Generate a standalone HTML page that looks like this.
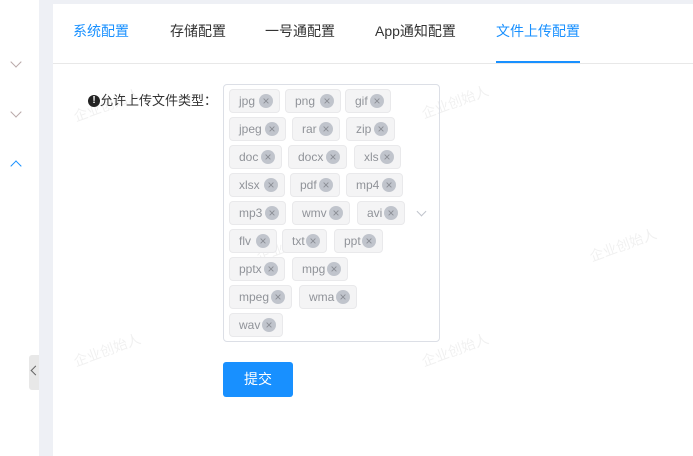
<!DOCTYPE html>
<html><head><meta charset="utf-8"><style>
body{margin:0;width:693px;height:456px;position:relative;overflow:hidden;background:#fff;font-family:"Liberation Sans","Noto Sans CJK SC",sans-serif;}
.strip{position:absolute;left:39px;top:0;width:14px;height:456px;background:#eef0f5;}
.topbar{position:absolute;left:39px;top:0;width:654px;height:4px;background:#eef0f5;}
.card{position:absolute;left:53px;top:4px;width:640px;height:452px;background:#fff;}
.tabs{position:absolute;left:53px;top:4px;width:640px;height:59px;border-bottom:1px solid #e8e8e8;}
.tab{position:absolute;top:22px;font-size:14px;color:#333;white-space:nowrap;line-height:18px;}
.act{color:#1890ff;}
.ul{position:absolute;left:496px;top:61px;width:84px;height:2px;background:#1890ff;}
.lab{position:absolute;left:100px;top:93px;font-size:13px;color:#333;line-height:16px;white-space:nowrap;}
.ex{position:absolute;left:88px;top:95px;width:12px;height:12px;border-radius:6px;background:#222;color:#fff;font-size:10px;line-height:12px;text-align:center;font-weight:bold;}
.box{position:absolute;left:223px;top:84px;width:215px;height:256px;border:1px solid #dcdfe6;border-radius:4px;}
.t{position:absolute;height:22px;background:#f4f4f5;border:1px solid #e9e9eb;border-radius:4px;font-size:12px;color:#909399;line-height:22px;box-sizing:content-box;}
.t span{position:absolute;left:9px;}
.t i{position:absolute;right:6px;top:4px;width:14px;height:14px;border-radius:7px;background:#c0c4cc;color:#8a8d94;font-style:normal;font-size:12px;line-height:14px;text-align:center;}
.btn{position:absolute;left:223px;top:362px;width:70px;height:35px;background:#1890ff;border-radius:3px;color:#fff;font-size:14px;line-height:35px;text-align:center;}
.chev{position:absolute;left:12px;width:7px;height:7px;border-right:1px solid #b8a8a8;border-bottom:1px solid #b8a8a8;transform:rotate(45deg);}
.handle{position:absolute;left:29px;top:355px;width:10px;height:35px;background:#e8e8e8;border-radius:3px 0 0 3px;}
.wm{position:absolute;color:rgba(0,0,0,0.06);font-size:14px;transform:rotate(-20deg);white-space:nowrap;}
</style></head><body>
<div class="strip"></div><div class="topbar"></div>
<div class="card"></div>
<div class="tabs"></div>
<div class="tab act" style="left:73px">系统配置</div>
<div class="tab" style="left:170px">存储配置</div>
<div class="tab" style="left:265px">一号通配置</div>
<div class="tab" style="left:375px">App通知配置</div>
<div class="tab act" style="left:496px">文件上传配置</div>
<div class="ul"></div>
<div class="chev" style="top:58px"></div>
<div class="chev" style="top:108px"></div>
<div class="chev" style="top:162px;transform:rotate(225deg);border-color:#1890ff"></div>
<div class="handle"></div>
<div style="position:absolute;left:32px;top:367px;width:6px;height:6px;border-left:1px solid #666;border-bottom:1px solid #666;transform:rotate(45deg)"></div>
<div class="wm" style="left:72px;top:95px">企业创始人</div>
<div class="wm" style="left:420px;top:92px">企业创始人</div>
<div class="wm" style="left:255px;top:235px">企业创始人</div>
<div class="wm" style="left:588px;top:235px">企业创始人</div>
<div class="wm" style="left:72px;top:340px">企业创始人</div>
<div class="wm" style="left:420px;top:340px">企业创始人</div>
<div class="ex">!</div>
<div class="lab">允许上传文件类型：</div>
<div class="box"></div>
<div style="position:absolute;left:418px;top:208px;width:6px;height:6px;border-right:1px solid #c0c4cc;border-bottom:1px solid #c0c4cc;transform:rotate(45deg)"></div>
<div class="t" style="left:229px;top:89px;width:49px"><span>jpg</span><i>×</i></div>
<div class="t" style="left:285px;top:89px;width:54px"><span>png</span><i>×</i></div>
<div class="t" style="left:345px;top:89px;width:44px"><span>gif</span><i>×</i></div>
<div class="t" style="left:229px;top:117px;width:55px"><span>jpeg</span><i>×</i></div>
<div class="t" style="left:292px;top:117px;width:46px"><span>rar</span><i>×</i></div>
<div class="t" style="left:346px;top:117px;width:47px"><span>zip</span><i>×</i></div>
<div class="t" style="left:229px;top:145px;width:51px"><span>doc</span><i>×</i></div>
<div class="t" style="left:288px;top:145px;width:57px"><span>docx</span><i>×</i></div>
<div class="t" style="left:354px;top:145px;width:45px"><span>xls</span><i>×</i></div>
<div class="t" style="left:229px;top:173px;width:54px"><span>xlsx</span><i>×</i></div>
<div class="t" style="left:290px;top:173px;width:48px"><span>pdf</span><i>×</i></div>
<div class="t" style="left:346px;top:173px;width:55px"><span>mp4</span><i>×</i></div>
<div class="t" style="left:229px;top:201px;width:55px"><span>mp3</span><i>×</i></div>
<div class="t" style="left:292px;top:201px;width:56px"><span>wmv</span><i>×</i></div>
<div class="t" style="left:357px;top:201px;width:46px"><span>avi</span><i>×</i></div>
<div class="t" style="left:229px;top:229px;width:46px"><span>flv</span><i>×</i></div>
<div class="t" style="left:282px;top:229px;width:43px"><span>txt</span><i>×</i></div>
<div class="t" style="left:334px;top:229px;width:47px"><span>ppt</span><i>×</i></div>
<div class="t" style="left:229px;top:257px;width:54px"><span>pptx</span><i>×</i></div>
<div class="t" style="left:292px;top:257px;width:54px"><span>mpg</span><i>×</i></div>
<div class="t" style="left:229px;top:285px;width:61px"><span>mpeg</span><i>×</i></div>
<div class="t" style="left:299px;top:285px;width:56px"><span>wma</span><i>×</i></div>
<div class="t" style="left:229px;top:313px;width:52px"><span>wav</span><i>×</i></div>
<div class="btn">提交</div>
</body></html>
